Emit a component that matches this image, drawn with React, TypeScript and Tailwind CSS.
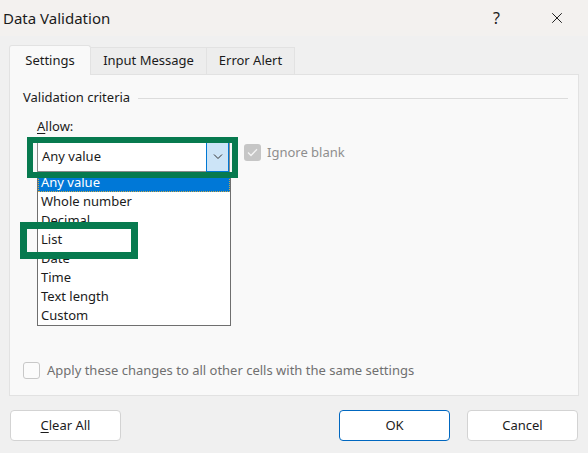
import { X } from "lucide-react";

const items = ["Any value", "Whole number", "Decimal", "List", "Date", "Time", "Text length", "Custom"];

export default function App() {
  return (
    <div className="relative w-[588px] h-[453px] overflow-hidden bg-[#f0f0f0] text-[#1b1b1b] font-['Noto_Sans',sans-serif]">
      {/* title bar */}
      <div className="h-[36px] flex items-center justify-between bg-[#f3f1ef] pl-[3px] pr-[22px]">
        <span className="text-[15px]">Data Validation</span>
        <div className="flex items-center gap-[48px]">
          <span className="text-[16px]">?</span>
          <X size={18} strokeWidth={1.3} />
        </div>
      </div>

      {/* tabs */}
      <div className="flex items-end pl-[9px] pt-[9px] h-[38px]">
        <div className="relative z-10 w-[82px] h-[30px] -mb-px bg-[#f9f9f9] border border-b-0 border-[#e2e2e2] rounded-t-[3px] flex items-center justify-center text-[13px]">
          Settings
        </div>
        <div className="w-[116px] h-[27px] bg-[#ededed] border-t border-r border-[#e2e2e2] flex items-center justify-center text-[13px]">
          Input Message
        </div>
        <div className="w-[88px] h-[27px] bg-[#ededed] border-t border-r border-[#e2e2e2] flex items-center justify-center text-[13px]">
          Error Alert
        </div>
      </div>

      {/* panel */}
      <div className="relative mx-[9px] h-[322px] bg-[#f9f9f9] border border-[#e2e2e2] px-[13px] pt-[13px]">
        <div className="flex items-center gap-[8px] h-[20px]">
          <span className="text-[13px]">Validation criteria</span>
          <div className="flex-1 h-px bg-[#dcdcdc] mr-[-3px]" />
        </div>

        <div className="pl-[14px] pt-[8px]">
          <div className="text-[13px] leading-[20px]">
            <span className="underline underline-offset-2">A</span>llow:
          </div>
          <div className="flex items-center mt-[6px] gap-[14px]">
            <div className="relative w-[193px] h-[30px] bg-white border border-[#8a8a8a] flex items-center">
              <span className="pl-[4px] text-[13px]">Any value</span>
              <div className="absolute right-[0px] top-[-1px] w-[23px] h-[30px] bg-[#cce4f7] border border-[#0078d4] flex items-center justify-center">
                <svg width="10" height="6" viewBox="0 0 10 6" fill="none" stroke="#333" strokeWidth="1">
                  <path d="M1 0.5 L5 4.5 L9 0.5" />
                </svg>
              </div>
              {/* dropdown list */}
              <div className="absolute left-[-1px] top-[29px] w-[194px] h-[154px] bg-white border border-[#6f6f6f] z-10">
                {items.map((it, i) => (
                  <div
                    key={it}
                    className={
                      i === 0
                        ? "h-[19px] leading-[19px] pl-[3px] text-[13px] text-white bg-[#0078d7] outline-1 outline-dotted outline-[#c9a94a] -outline-offset-1"
                        : "h-[19px] leading-[19px] pl-[3px] text-[13px]"
                    }
                  >
                    {it}
                  </div>
                ))}
              </div>
            </div>
            <div className="flex items-center gap-[6px] -mt-[9px]">
              <div className="w-[17px] h-[17px] rounded-[3px] bg-[#c6c6c6] flex items-center justify-center">
                <svg width="11" height="9" viewBox="0 0 11 9" fill="none" stroke="#f4f4f4" strokeWidth="1.3">
                  <path d="M1 4.5 L4 7.5 L10 1.2" />
                </svg>
              </div>
              <span className="text-[13px] text-[#8e8e8e]">Ignore blank</span>
            </div>
          </div>
        </div>

        <div className="absolute left-[13px] bottom-[15px] flex items-center gap-[7px]">
          <div className="w-[17px] h-[17px] rounded-[3px] border border-[#c8c8c8] bg-[#fbfbfb]" />
          <span className="text-[13px] text-[#707070]">Apply these changes to all other cells with the same settings</span>
        </div>
      </div>

      {/* buttons */}
      <div className="flex items-center justify-between px-[10px] pt-[14px]">
        <button className="w-[111px] h-[31px] bg-white border border-[#d3d3d3] rounded-[4px] text-[13px]">
          <span className="underline underline-offset-2">C</span>lear All
        </button>
        <div className="flex gap-[17px]">
          <button className="w-[111px] h-[31px] bg-white border border-[#0067c0] rounded-[4px] text-[13px]">OK</button>
          <button className="w-[111px] h-[31px] bg-white border border-[#d3d3d3] rounded-[4px] text-[13px]">Cancel</button>
        </div>
      </div>

      {/* annotation boxes */}
      <div className="absolute left-[27px] top-[137px] w-[211px] h-[41px] border-[6px] border-[#077a4f] z-20" />
      <div className="absolute left-[20px] top-[222px] w-[118px] h-[37px] border-[7px] border-[#077a4f] z-20" />
    </div>
  );
}
